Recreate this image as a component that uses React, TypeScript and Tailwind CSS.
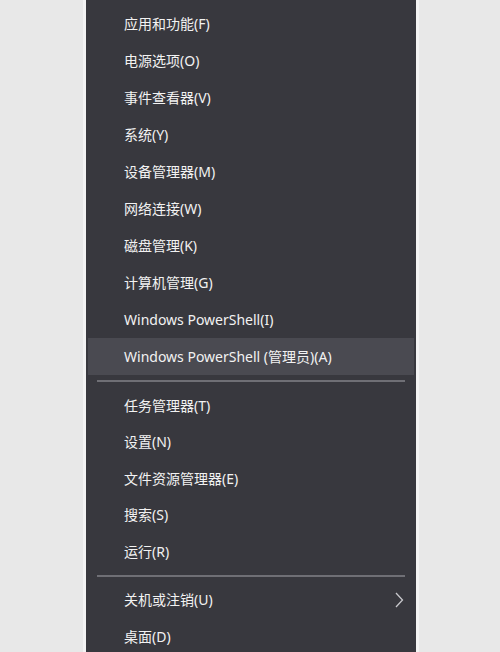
import React from "react";

const group1 = [
  "应用和功能(F)",
  "电源选项(O)",
  "事件查看器(V)",
  "系统(Y)",
  "设备管理器(M)",
  "网络连接(W)",
  "磁盘管理(K)",
  "计算机管理(G)",
  "Windows PowerShell(I)",
  "Windows PowerShell (管理员)(A)",
];
const group2 = ["任务管理器(T)", "设置(N)", "文件资源管理器(E)", "搜索(S)", "运行(R)"];

function Row({ label, active, arrow, tight }: { label: string; active?: boolean; arrow?: boolean; tight?: boolean }) {
  return (
    <div
      className={`mx-[2px] flex items-center justify-between pl-[36px] pr-[10px] text-[14px] text-[#f2f2f2] ${
        tight ? "h-[36.5px]" : "h-[37px]"
      } ${active ? "bg-[#4a4a51]" : ""}`}
    >
      <span>{label}</span>
      {arrow && (
        <svg width="10" height="16" viewBox="0 0 10 16">
          <polyline points="2,1 8.5,8 2,15" fill="none" stroke="#c8c8cc" strokeWidth="1.3" />
        </svg>
      )}
    </div>
  );
}

function Sep() {
  return <div className="mx-[11px] my-[5px] h-[2px] bg-[#6f6f75]" />;
}

export default function App() {
  return (
    <div className="flex h-[652px] w-[500px] justify-center overflow-hidden bg-[#e8e8e8] pl-[2px]">
      <div
        className="h-[660px] w-[330px] bg-[#38383e] pt-[5px] shadow-[0_0_0_3px_#f3f3f3]"
        style={{ fontFamily: '"Noto Sans", "Noto Sans CJK SC", sans-serif' }}
      >
        {group1.map((l, i) => (
          <Row key={l} label={l} active={i === 9} />
        ))}
        <Sep />
        {group2.map((l) => (
          <Row key={l} label={l} tight />
        ))}
        <div className="mx-[11px] mb-[4.5px] mt-[5px] h-[2px] bg-[#6f6f75]" />
        <Row label="关机或注销(U)" arrow />
        <Row label="桌面(D)" />
      </div>
    </div>
  );
}
